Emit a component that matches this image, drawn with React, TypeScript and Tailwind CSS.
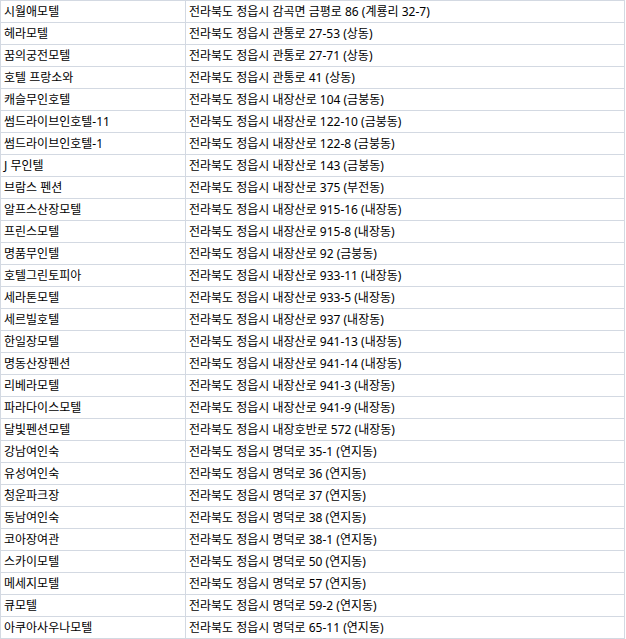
import React from 'react';

interface Lodging {
  name: string;
  address: string;
}

const lodgings: Lodging[] = [
  { name: '시월애모텔', address: '전라북도 정읍시 감곡면 금평로 86 (계룡리 32-7)' },
  { name: '헤라모텔', address: '전라북도 정읍시 관통로 27-53 (상동)' },
  { name: '꿈의궁전모텔', address: '전라북도 정읍시 관통로 27-71 (상동)' },
  { name: '호텔 프랑소와', address: '전라북도 정읍시 관통로 41 (상동)' },
  { name: '캐슬무인호텔', address: '전라북도 정읍시 내장산로 104 (금붕동)' },
  { name: '썸드라이브인호텔-11', address: '전라북도 정읍시 내장산로 122-10 (금붕동)' },
  { name: '썸드라이브인호텔-1', address: '전라북도 정읍시 내장산로 122-8 (금붕동)' },
  { name: 'J 무인텔', address: '전라북도 정읍시 내장산로 143 (금붕동)' },
  { name: '브람스 펜션', address: '전라북도 정읍시 내장산로 375 (부전동)' },
  { name: '알프스산장모텔', address: '전라북도 정읍시 내장산로 915-16 (내장동)' },
  { name: '프린스모텔', address: '전라북도 정읍시 내장산로 915-8 (내장동)' },
  { name: '명품무인텔', address: '전라북도 정읍시 내장산로 92 (금붕동)' },
  { name: '호텔그린토피아', address: '전라북도 정읍시 내장산로 933-11 (내장동)' },
  { name: '세라톤모텔', address: '전라북도 정읍시 내장산로 933-5 (내장동)' },
  { name: '세르빌호텔', address: '전라북도 정읍시 내장산로 937 (내장동)' },
  { name: '한일장모텔', address: '전라북도 정읍시 내장산로 941-13 (내장동)' },
  { name: '명동산장펜션', address: '전라북도 정읍시 내장산로 941-14 (내장동)' },
  { name: '리베라모텔', address: '전라북도 정읍시 내장산로 941-3 (내장동)' },
  { name: '파라다이스모텔', address: '전라북도 정읍시 내장산로 941-9 (내장동)' },
  { name: '달빛펜션모텔', address: '전라북도 정읍시 내장호반로 572 (내장동)' },
  { name: '강남여인숙', address: '전라북도 정읍시 명덕로 35-1 (연지동)' },
  { name: '유성여인숙', address: '전라북도 정읍시 명덕로 36 (연지동)' },
  { name: '청운파크장', address: '전라북도 정읍시 명덕로 37 (연지동)' },
  { name: '동남여인숙', address: '전라북도 정읍시 명덕로 38 (연지동)' },
  { name: '코아장여관', address: '전라북도 정읍시 명덕로 38-1 (연지동)' },
  { name: '스카이모텔', address: '전라북도 정읍시 명덕로 50 (연지동)' },
  { name: '메세지모텔', address: '전라북도 정읍시 명덕로 57 (연지동)' },
  { name: '큐모텔', address: '전라북도 정읍시 명덕로 59-2 (연지동)' },
  { name: '아쿠아사우나모텔', address: '전라북도 정읍시 명덕로 65-11 (연지동)' },
];

export default function App() {
  return (
    <div className="bg-white w-[626px] h-[639px] overflow-hidden font-['Noto_Sans','Noto_Sans_CJK_KR',sans-serif] text-[12px] text-black">
      <table className="border-collapse w-[625px] table-fixed">
        <colgroup>
          <col className="w-[185px]" />
          <col />
        </colgroup>
        <tbody>
          {lodgings.map((item) => (
            <tr key={item.name} className="h-[22px]">
              <td className="border border-[#d3d9e2] px-[3px] py-0 leading-[21px] whitespace-nowrap">
                {item.name}
              </td>
              <td className="border border-[#d3d9e2] px-[3px] py-0 leading-[21px] whitespace-nowrap">
                {item.address}
              </td>
            </tr>
          ))}
        </tbody>
      </table>
    </div>
  );
}
